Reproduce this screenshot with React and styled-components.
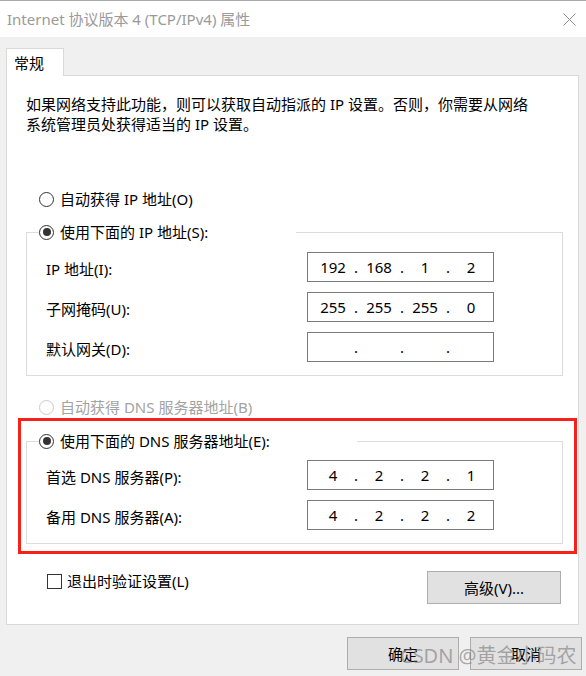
import React from "react";
import styled, { createGlobalStyle } from "styled-components";

const GlobalStyle = createGlobalStyle`
    html, body {
        margin: 0;
        padding: 0;
    }

    body {
        width: 586px;
        height: 676px;
        overflow: hidden;
        background: #f0f0f0;
        font-family: "Noto Sans", "Noto Sans CJK SC", sans-serif;
        font-size: 15px;
        color: #000;
    }
`;

const Window = styled.div`
    position: relative;
    width: 586px;
    height: 676px;
    box-sizing: border-box;
    border-top: 1px solid #a8a8a8;
    background: #f0f0f0;
    display: flex;
    flex-direction: column;
`;

const TitleBar = styled.div`
    height: 36px;
    flex-shrink: 0;
    background: #fff;
    display: flex;
    align-items: center;
    justify-content: space-between;
    padding: 0 10px 0 7px;
    color: #9a9a9a;
    line-height: 20px;
`;

const Body = styled.div`
    padding: 11px 7px 0 6px;
    display: flex;
    flex-direction: column;
`;

const TabStrip = styled.div`
    display: flex;
`;

const Tab = styled.div`
    position: relative;
    z-index: 1;
    width: 58px;
    height: 28px;
    box-sizing: border-box;
    margin-bottom: -1px;
    padding: 4px 0 0 7px;
    line-height: 20px;
    background: #fff;
    border: 1px solid #d9d9d9;
    border-bottom: none;
`;

const Panel = styled.div`
    height: 550px;
    box-sizing: border-box;
    background: #fff;
    border: 1px solid #d9d9d9;
    padding: 18px 15px 0 19px;
    display: flex;
    flex-direction: column;
`;

const Description = styled.p`
    margin: 0;
    line-height: 20px;
`;

const RadioRow = styled.label`
    display: flex;
    align-items: center;
    gap: 6px;
    height: 20px;
    line-height: 20px;
    margin-top: ${(p) => p.$top || 0}px;
    padding-left: ${(p) => (p.$legend ? 0 : 13)}px;
    color: ${(p) => (p.$disabled ? "#a3a3a3" : "#000")};
`;

const RadioCircle = styled.span`
    width: 15px;
    height: 15px;
    box-sizing: border-box;
    border-radius: 50%;
    border: 1px solid ${(p) => (p.$disabled ? "#cccccc" : "#333")};
    background: #fff;
    display: flex;
    align-items: center;
    justify-content: center;
    flex-shrink: 0;

    &::after {
        content: "";
        width: 8px;
        height: 8px;
        border-radius: 50%;
        background: #333;
        display: ${(p) => (p.$checked ? "block" : "none")};
    }
`;

const Group = styled.fieldset`
    margin: ${(p) => p.$top || 0}px 0 0 0;
    padding: ${(p) => p.$padTop}px 0 13px 0;
    min-inline-size: 0;
    border: 1px solid #dcdcdc;
`;

const Legend = styled.legend`
    width: ${(p) => p.$width}px;
    margin-left: 12px;
    padding: 0;
    height: 20px;
`;

const FieldGrid = styled.div`
    display: grid;
    grid-template-columns: 261px 187px;
    row-gap: 10px;
    align-items: center;
    padding-left: 19px;
`;

const FieldLabel = styled.span`
    line-height: 20px;
    padding-top: 4px;
`;

const IpBox = styled.div`
    width: 187px;
    height: 30px;
    box-sizing: border-box;
    border: 1px solid #7a7a7a;
    background: #fff;
    display: flex;
    align-items: center;
    padding-left: 5px;
    line-height: 20px;
`;

const Octet = styled.span`
    width: 40px;
    text-align: center;
`;

const Dot = styled.span`
    width: 6px;
    text-align: center;
`;

const Highlight = styled.div`
    margin: 1px -14px 0 -8px;
    border: 3px solid #f5221a;
    padding: 10px 11px 7px 5px;
`;

const OptionsRow = styled.div`
    margin-top: 17px;
    display: flex;
    align-items: flex-start;
    justify-content: space-between;
    padding-left: 21px;
    padding-right: 2px;
`;

const CheckRow = styled.label`
    display: flex;
    align-items: center;
    gap: 5px;
    height: 20px;
    line-height: 20px;
`;

const CheckBox = styled.span`
    width: 15px;
    height: 15px;
    box-sizing: border-box;
    border: 1px solid #333;
    background: #fff;
`;

const Button = styled.div`
    width: ${(p) => p.$width}px;
    height: 33px;
    box-sizing: border-box;
    background: #e1e1e1;
    border: 1px solid #adadad;
    display: flex;
    align-items: center;
    justify-content: center;
    line-height: 20px;
`;

const Footer = styled.div`
    margin-top: 12px;
    margin-right: -3px;
    display: flex;
    justify-content: flex-end;
    gap: 11px;
`;

const Watermark = styled.div`
    position: absolute;
    left: 400px;
    top: 642px;
    font-size: 20px;
    line-height: 26px;
    color: rgba(120, 120, 120, 0.6);
    white-space: nowrap;
    pointer-events: none;
`;

const CloseIcon = () => (
    <svg width="13" height="13" viewBox="0 0 13 13">
        <path d="M0.5 0.5 L12.5 12.5 M12.5 0.5 L0.5 12.5" stroke="#8c8c8c" strokeWidth="1" fill="none" />
    </svg>
);

const IpField = ({ parts }) => (
    <IpBox>
        {parts.map((part, i) => (
            <React.Fragment key={i}>
                {i > 0 && <Dot>.</Dot>}
                <Octet>{part}</Octet>
            </React.Fragment>
        ))}
    </IpBox>
);

const Radio = ({ checked, disabled, legend, top, children }) => (
    <RadioRow $legend={legend} $top={top} $disabled={disabled}>
        <RadioCircle $checked={checked} $disabled={disabled} />
        <span>{children}</span>
    </RadioRow>
);

const ipFields = [
    { label: "IP 地址(I):", parts: ["192", "168", "1", "2"] },
    { label: "子网掩码(U):", parts: ["255", "255", "255", "0"] },
    { label: "默认网关(D):", parts: ["", "", "", ""] },
];

const dnsFields = [
    { label: "首选 DNS 服务器(P):", parts: ["4", "2", "2", "1"] },
    { label: "备用 DNS 服务器(A):", parts: ["4", "2", "2", "2"] },
];

const App = () => (
    <>
        <GlobalStyle />
        <Window>
            <TitleBar>
                <span>Internet 协议版本 4 (TCP/IPv4) 属性</span>
                <CloseIcon />
            </TitleBar>
            <Body>
                <TabStrip>
                    <Tab>常规</Tab>
                </TabStrip>
                <Panel>
                    <Description>
                        如果网络支持此功能，则可以获取自动指派的 IP 设置。否则，你需要从网络
                        <br />
                        系统管理员处获得适当的 IP 设置。
                    </Description>

                    <Radio top={55}>自动获得 IP 地址(O)</Radio>

                    <Group $top={13} $padTop={10}>
                        <Legend $width={257}>
                            <Radio checked legend>
                                使用下面的 IP 地址(S):
                            </Radio>
                        </Legend>
                        <FieldGrid>
                            {ipFields.map((f) => (
                                <React.Fragment key={f.label}>
                                    <FieldLabel>{f.label}</FieldLabel>
                                    <IpField parts={f.parts} />
                                </React.Fragment>
                            ))}
                        </FieldGrid>
                    </Group>

                    <Radio top={21} disabled>
                        自动获得 DNS 服务器地址(B)
                    </Radio>

                    <Highlight>
                        <Group $padTop={9}>
                            <Legend $width={318}>
                                <Radio checked legend>
                                    使用下面的 DNS 服务器地址(E):
                                </Radio>
                            </Legend>
                            <FieldGrid>
                                {dnsFields.map((f) => (
                                    <React.Fragment key={f.label}>
                                        <FieldLabel>{f.label}</FieldLabel>
                                        <IpField parts={f.parts} />
                                    </React.Fragment>
                                ))}
                            </FieldGrid>
                        </Group>
                    </Highlight>

                    <OptionsRow>
                        <CheckRow>
                            <CheckBox />
                            <span>退出时验证设置(L)</span>
                        </CheckRow>
                        <Button $width={134}>高级(V)...</Button>
                    </OptionsRow>
                </Panel>
                <Footer>
                    <Button $width={112}>确定</Button>
                    <Button $width={112}>取消</Button>
                </Footer>
            </Body>
            <Watermark>CSDN @黄金小码农</Watermark>
        </Window>
    </>
);

export default App;
